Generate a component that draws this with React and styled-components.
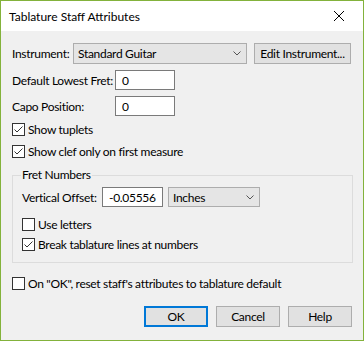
import React from 'react';
import styled, { createGlobalStyle } from 'styled-components';

const GlobalStyle = createGlobalStyle`
  html, body {
    margin: 0;
    padding: 0;
    background: #f0f0f0;
  }
  body {
    font-family: Lato, "Liberation Sans", sans-serif;
    font-size: 12px;
    letter-spacing: -0.3px;
    color: #000;
  }
`;

// Window frame
const Window = styled.div`
  width: 364px;
  height: 341px;
  box-sizing: border-box;
  border: 1px solid #83b23b;
  background: #f0f0f0;
  display: flex;
  flex-direction: column;
`;

const TitleBar = styled.div`
  height: 30px;
  background: #fff;
  display: flex;
  align-items: center;
  justify-content: space-between;
  padding: 0 0 0 8px;
`;

const Title = styled.span`
  font-size: 12px;
  letter-spacing: 0;
  color: #000;
`;

const CloseButton = styled.div`
  width: 46px;
  height: 30px;
  display: flex;
  align-items: center;
  justify-content: center;
  margin-right: 1px;
`;

const Body = styled.div`
  flex: 1;
  padding: 12px 11px 0 11px;
  display: flex;
  flex-direction: column;
`;

const Row = styled.div`
  display: flex;
  align-items: center;
  height: ${(p) => p.h || 20}px;
  margin-top: ${(p) => p.mt || 0}px;
`;

const Label = styled.span`
  width: ${(p) => p.w}px;
  flex-shrink: 0;
  white-space: nowrap;
`;

const TextInput = styled.div`
  width: ${(p) => p.w}px;
  height: 20px;
  box-sizing: border-box;
  border: 1px solid #7a7a7a;
  background: #fff;
  padding-left: 6px;
  display: flex;
  align-items: center;
`;

const Select = styled.div`
  width: ${(p) => p.w}px;
  height: ${(p) => p.h || 21}px;
  box-sizing: border-box;
  border: 1px solid #adadad;
  background: #e5e5e5;
  padding: 0 5px 0 4px;
  display: flex;
  align-items: center;
  justify-content: space-between;
  margin-left: ${(p) => p.ml || 0}px;
`;

const Button = styled.div`
  width: ${(p) => p.w || 64}px;
  height: 21px;
  box-sizing: border-box;
  border: ${(p) => (p.primary ? '2px solid #0078d7' : '1px solid #adadad')};
  background: #e1e1e1;
  display: flex;
  align-items: center;
  justify-content: center;
  white-space: nowrap;
  margin-left: ${(p) => p.ml || 0}px;
`;

const CheckRow = styled.div`
  display: flex;
  align-items: center;
  height: 13px;
  white-space: nowrap;
  margin-top: ${(p) => p.mt || 0}px;
`;

const Box = styled.div`
  width: 13px;
  height: 13px;
  box-sizing: border-box;
  border: 1px solid #333;
  background: #fff;
  margin-right: 3px;
  display: flex;
  align-items: center;
  justify-content: center;
  flex-shrink: 0;
`;

const Group = styled.fieldset`
  margin: 10px 0 0 0;
  padding: 0 9px 11px 9px;
  border: 1px solid #dcdcdc;
  width: 341px;
  box-sizing: border-box;
`;

const Legend = styled.legend`
  padding: 0 1px;
  margin-left: -1px;
  line-height: 14px;
`;

const ButtonBar = styled.div`
  display: flex;
  justify-content: flex-end;
  margin-top: 16px;
`;

const Chevron = () => (
  <svg width="8" height="5" viewBox="0 0 8 5">
    <polyline points="0.5,0.5 4,4 7.5,0.5" fill="none" stroke="#555" strokeWidth="1" />
  </svg>
);

const Checkbox = ({ checked, label, mt }) => (
  <CheckRow mt={mt}>
    <Box>
      {checked && (
        <svg width="11" height="11" viewBox="0 0 11 11">
          <polyline points="1.5,5.5 4,8 9.5,2.5" fill="none" stroke="#333" strokeWidth="1" />
        </svg>
      )}
    </Box>
    <span>{label}</span>
  </CheckRow>
);

export default function App() {
  return (
    <>
      <GlobalStyle />
      <Window>
        <TitleBar>
          <Title>Tablature Staff Attributes</Title>
          <CloseButton>
            <svg width="10" height="10" viewBox="0 0 10 10">
              <path d="M0 0 L10 10 M10 0 L0 10" stroke="#000" strokeWidth="1" />
            </svg>
          </CloseButton>
        </TitleBar>
        <Body>
          <Row h={21}>
            <Label w={61}>Instrument:</Label>
            <Select w={174}>
              <span>Standard Guitar</span>
              <Chevron />
            </Select>
            <Button w={97} ml={7}>Edit Instrument...</Button>
          </Row>
          <Row mt={6}>
            <Label w={103}>Default Lowest Fret:</Label>
            <TextInput w={60}>0</TextInput>
          </Row>
          <Row mt={6}>
            <Label w={103}>Capo Position:</Label>
            <TextInput w={60}>0</TextInput>
          </Row>
          <Checkbox mt={7} checked label="Show tuplets" />
          <Checkbox mt={9} checked label="Show clef only on first measure" />
          <Group>
            <Legend>Fret Numbers</Legend>
            <Row mt={5}>
              <Label w={80}>Vertical Offset:</Label>
              <TextInput w={61}>-0.05556</TextInput>
              <Select w={92} h={20} ml={5}>
                <span>Inches</span>
                <Chevron />
              </Select>
            </Row>
            <Checkbox mt={11} label="Use letters" />
            <Checkbox mt={7} checked label="Break tablature lines at numbers" />
          </Group>
          <Checkbox mt={14} label={'On "OK", reset staff\'s attributes to tablature default'} />
          <ButtonBar>
            <Button primary>OK</Button>
            <Button ml={8}>Cancel</Button>
            <Button ml={8}>Help</Button>
          </ButtonBar>
        </Body>
      </Window>
    </>
  );
}
